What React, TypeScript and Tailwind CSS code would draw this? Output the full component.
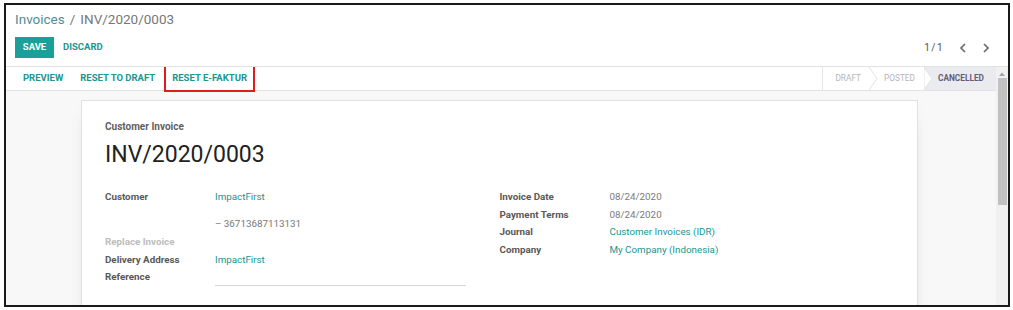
import React from 'react';
import clsx from 'clsx';

const teal = 'text-[#21958f]';

const Row = ({
  label,
  children,
  muted,
}: {
  label?: string;
  children?: React.ReactNode;
  muted?: boolean;
}) => (
  <div className="flex h-[17.5px] items-center">
    <div
      className={clsx(
        'w-[110px] shrink-0 font-bold',
        muted ? 'text-[#bdbdbd]' : 'text-[#595959]'
      )}
    >
      {label}
    </div>
    <div className="min-w-0 flex-1">{children}</div>
  </div>
);

const Chevron = ({ dir }: { dir: 'left' | 'right' }) => (
  <svg width="8" height="10" viewBox="0 0 8 10" className="block">
    <polyline
      points={dir === 'left' ? '6,1 2,5 6,9' : '2,1 6,5 2,9'}
      fill="none"
      stroke="#6b6b6b"
      strokeWidth="1.7"
    />
  </svg>
);

export default function App() {
  return (
    <div className="h-[310px] w-[1013px] bg-white pb-[3px] pl-[4px] pr-[3px] pt-[3px] font-['Roboto',sans-serif]">
      <div className="flex h-full flex-col border-2 border-[#1a1a1a] bg-white">
        {/* control panel */}
        <div className="flex flex-col border-b border-[#e2e2e2] pb-[8px] pl-[9px] pr-[18px] pt-[6px]">
          <div className="flex h-[17px] items-center text-[13.5px]">
            <span className="text-[#4f8e95]">Invoices</span>
            <span className="px-[5px] text-[#777]">/</span>
            <span className="text-[#777]">INV/2020/0003</span>
          </div>
          <div className="mt-[9px] flex h-[21px] items-center">
            <div className="flex h-[21px] w-[39px] items-center justify-center bg-[#1c9f98] text-[9.5px] font-bold text-white">
              SAVE
            </div>
            <div className={clsx('ml-[9px] text-[9.5px] font-bold', teal)}>DISCARD</div>
            <div className="ml-auto flex items-center">
              <span className="text-[10px] tracking-[-0.5px] text-[#555]">1 / 1</span>
              <div className="ml-[17px] flex items-center gap-[15px]">
                <Chevron dir="left" />
                <Chevron dir="right" />
              </div>
            </div>
          </div>
        </div>

        {/* scrolling content */}
        <div className="flex min-h-0 flex-1">
          <div className="flex min-w-0 flex-1 flex-col overflow-hidden">
            {/* status header */}
            <div className="flex h-[24px] shrink-0 items-stretch border-b border-[#e2e2e2] bg-white">
              <div className="flex items-center gap-[17px] pl-[17px] text-[9.5px] font-bold">
                <span className={teal}>PREVIEW</span>
                <span className={teal}>RESET TO DRAFT</span>
                <span className={clsx('relative', teal)}>
                  RESET E-FAKTUR
                  <span className="pointer-events-none absolute bottom-[-6px] left-[-8px] right-[-8px] top-[-9px] border-2 border-[#e21b1b]" />
                </span>
              </div>
              <div className="ml-auto flex items-stretch text-[8.3px]">
                <div className="flex items-center border-l border-[#e6e6e6] pl-[12px] pr-[8px] text-[#b5b5b5]">
                  DRAFT
                </div>
                <svg width="9" height="23" viewBox="0 0 9 23" className="block">
                  <polyline points="0,0 8,11.5 0,23" fill="none" stroke="#e2e2e2" strokeWidth="1" />
                </svg>
                <div className="flex items-center pl-[6px] pr-[9px] text-[#b5b5b5]">POSTED</div>
                <svg width="9" height="23" viewBox="0 0 9 23" className="block bg-[#e9ebee]">
                  <polygon points="0,0 8,11.5 0,23" fill="#ffffff" stroke="#e2e2e2" strokeWidth="1" />
                </svg>
                <div className="flex items-center bg-[#e9ebee] pl-[5px] pr-[12px] font-bold text-[#675a79]">
                  CANCELLED
                </div>
              </div>
            </div>

            {/* sheet background */}
            <div className="flex-1 bg-[#f8f8f8] pl-[75px] pt-[9px]">
              <div className="h-[260px] w-[837px] border border-[#e1e1e1] bg-white px-[23px] pt-[18px] shadow-[0_6px_18px_-12px_rgba(0,0,0,0.35)]">
                <div className="flex h-[14px] items-center text-[10px] font-bold text-[#5f5f5f]">
                  Customer Invoice
                </div>
                <div className="mt-[7px] flex h-[30px] items-center text-[23px] text-[#222]">
                  INV/2020/0003
                </div>

                <div className="mt-[19px] grid grid-cols-2 text-[9.8px]">
                  <div>
                    <Row label="Customer">
                      <span className={teal}>ImpactFirst</span>
                    </Row>
                    <div className="mt-[9.5px]">
                      <Row>
                        <span className="text-[#777]">– 36713687113131</span>
                      </Row>
                    </div>
                    <div className="mt-[0.5px]">
                      <Row label="Replace Invoice" muted />
                    </div>
                    <Row label="Delivery Address">
                      <span className={teal}>ImpactFirst</span>
                    </Row>
                    <Row label="Reference">
                      <div className="h-[17px] w-[251px] border-b border-[#d6d6d6]" />
                    </Row>
                  </div>
                  <div>
                    <Row label="Invoice Date">
                      <span className="text-[#7a7a7a]">08/24/2020</span>
                    </Row>
                    <Row label="Payment Terms">
                      <span className="text-[#7a7a7a]">08/24/2020</span>
                    </Row>
                    <Row label="Journal">
                      <span className={teal}>Customer Invoices (IDR)</span>
                    </Row>
                    <Row label="Company">
                      <span className={teal}>My Company (Indonesia)</span>
                    </Row>
                  </div>
                </div>
              </div>
            </div>
          </div>

          {/* scrollbar */}
          <div className="flex w-[12px] shrink-0 flex-col items-center bg-[#f1f1f1]">
            <svg width="8" height="6" viewBox="0 0 8 6" className="mt-[4px] block">
              <polygon points="1,5 4,1.5 7,5" fill="#a3a3a3" />
            </svg>
            <div className="mt-[1px] h-[127px] w-[9px] bg-[#c1c1c1]" />
          </div>
        </div>
      </div>
    </div>
  );
}
